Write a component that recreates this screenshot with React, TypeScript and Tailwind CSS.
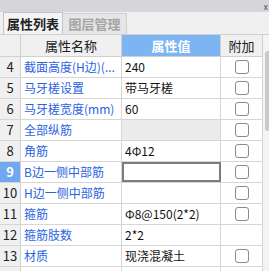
const rows: { n: number; name: string; value: string; check: boolean; disabled?: boolean; active?: boolean }[] = [
  { n: 4, name: "截面高度(H边)(...", value: "240", check: true },
  { n: 5, name: "马牙槎设置", value: "带马牙槎", check: true },
  { n: 6, name: "马牙槎宽度(mm)", value: "60", check: true },
  { n: 7, name: "全部纵筋", value: "", check: true, disabled: true },
  { n: 8, name: "角筋", value: "4Φ12", check: true },
  { n: 9, name: "B边一侧中部筋", value: "", check: true, active: true },
  { n: 10, name: "H边一侧中部筋", value: "", check: true },
  { n: 11, name: "箍筋", value: "Φ8@150(2*2)", check: true },
  { n: 12, name: "箍筋肢数", value: "2*2", check: false },
  { n: 13, name: "材质", value: "现浇混凝土", check: true },
  { n: 14, name: "", value: "", check: false },
];

function Box() {
  return <div className="w-[14px] h-[14px] rounded-[3px] border border-[#8a8a8a] bg-white" />;
}

export default function App() {
  return (
    <div
      className="w-[269px] h-[271px] overflow-hidden bg-[#f0f0f0] text-[12px] text-black"
      style={{ fontFamily: '"Noto Sans CJK SC", "Noto Sans", sans-serif' }}
    >
      {/* title strip */}
      <div className="h-[12px] bg-[#d5d5da] flex justify-end items-center pr-[1px]">
        <span className="text-[9px] leading-none text-[#555]">x</span>
      </div>

      {/* tabs */}
      <div className="h-[23px] flex items-end pl-[3px] border-b border-[#cfcfcf]">
        <div className="h-[22px] w-[60px] flex items-center justify-center border border-b-0 border-[#c4c4c4] bg-[#f4f4f4] font-bold text-[13px] text-[#222]">
          属性列表
        </div>
        <div className="h-[21px] w-[64px] flex items-center justify-center border border-l-0 border-b-0 border-[#cfcfcf] bg-[#e6e6e6] font-bold text-[13px] text-[#a4a4a4]">
          图层管理
        </div>
      </div>

      <div className="flex">
        <div className="w-[263px] bg-white">
          {/* header */}
          <div className="flex h-[22px] border-b border-[#d0d0d0] bg-[#f0f0f0]">
            <div className="w-[21px] border-r border-[#d0d0d0]" />
            <div className="w-[101px] border-r border-[#d0d0d0] flex items-center justify-center text-[13px] text-[#222]">
              属性名称
            </div>
            <div className="w-[99px] border-r border-[#d0d0d0] bg-[#7db5f3] flex items-center justify-center text-[13px] text-white font-bold">
              属性值
            </div>
            <div className="w-[42px] border-r border-[#d0d0d0] flex items-center justify-center text-[13px] text-[#222]">
              附加
            </div>
          </div>

          {rows.map((r) => (
            <div key={r.n} className="flex h-[21px] border-b border-[#d6d6d6]">
              <div
                className={
                  r.active
                    ? "w-[21px] border-r border-[#d0d0d0] bg-[#6fa8f0] text-white font-bold flex items-center justify-center text-[13px]"
                    : "w-[21px] border-r border-[#d0d0d0] bg-[#f0f0f0] text-[#222] flex items-center justify-center text-[13px]"
                }
              >
                {r.n < 14 ? r.n : ""}
              </div>
              <div className="w-[101px] border-r border-[#d6d6d6] flex items-center pl-[3px] text-[#2b63e0] text-[12px] whitespace-nowrap overflow-hidden">
                {r.name}
              </div>
              <div
                className={
                  r.active
                    ? "w-[99px] border-2 border-[#7c7c7c] bg-white"
                    : r.disabled
                    ? "w-[99px] border-r border-[#d6d6d6] bg-[#ebebeb]"
                    : "w-[99px] border-r border-[#d6d6d6] flex items-center pl-[3px] text-[12px] text-[#111] whitespace-nowrap overflow-hidden"
                }
              >
                {r.value}
              </div>
              <div className="w-[42px] border-r border-[#d6d6d6] flex items-center justify-center">
                {r.check && <Box />}
              </div>
            </div>
          ))}
        </div>

        {/* scrollbar */}
        <div className="flex-1 bg-[#f4f4f4] pl-[2px] pt-[16px]">
          <div className="w-[5px] h-[80px] rounded-l-[3px] bg-[#c9c9c9]" />
        </div>
      </div>
    </div>
  );
}
